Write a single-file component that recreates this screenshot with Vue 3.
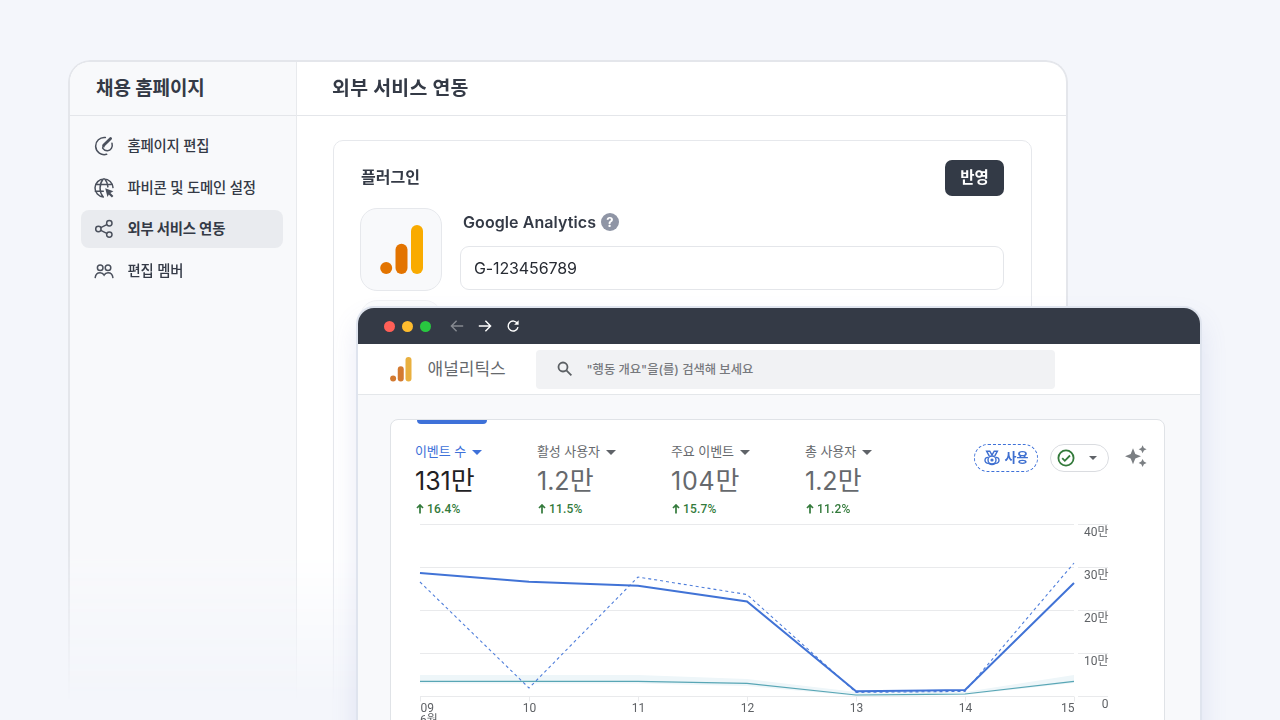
<template>
  <div class="stage" lang="ko">
    <section class="site-window">
      <aside class="sidebar">
        <h2 class="heading">채용 홈페이지</h2>
        <nav class="menu">
          <a v-for="item in menu" :key="item.icon" class="menu-item" :class="{ active: item.active }">
            <svg v-if="item.icon === 'edit'" class="menu-icon" viewBox="0 0 20 20">
              <path d="M11.4 1.5A8.6 8.6 0 1 0 12.6 18.3" />
              <path d="M18 7.2c1.1 3.9-1.2 7.4-4.5 7.5-2.2.1-3.7-.9-4.7-2.4" />
              <path d="M9.7 9.3 16.6 2.5" class="thick" />
              <path d="m7.8 12.2 1-3.5 2.3 2.3z" class="solid" />
            </svg>
            <svg v-else-if="item.icon === 'globe'" class="menu-icon" viewBox="0 0 20 20">
              <path d="M9.4 19A9 9 0 1 1 19 9.6M1.7 6.6h16.6M1.3 13.3h8M9.2 1.1C5 6.2 5 13.8 9.2 18.9M10.8 1.1c1.9 2.3 3 5 3.1 7.8" />
              <path d="m11.2 10.3 8.2 3-3 1.6 3 3.1-1.5 1.5-3.1-3.1-1.3 2.7z" class="solid" />
            </svg>
            <svg v-else-if="item.icon === 'share'" class="menu-icon" viewBox="0 0 20 20">
              <circle cx="4.4" cy="10" r="2.7" />
              <circle cx="15.3" cy="4.3" r="2.7" />
              <circle cx="15.3" cy="15.6" r="2.7" />
              <path d="m6.8 8.7 6-3.1M6.8 11.3l6 3.1" />
            </svg>
            <svg v-else class="menu-icon" viewBox="0 0 20 20">
              <circle cx="6.2" cy="6.7" r="2.8" />
              <circle cx="14" cy="6.7" r="2.8" />
              <path d="M1.2 16.6c.3-3 2.2-4.9 4.9-4.9 1.7 0 3.1.8 4 2.3.9-1.5 2.2-2.3 3.9-2.3 2.7 0 4.6 1.9 4.9 4.9" />
            </svg>
            <span>{{ item.label }}</span>
          </a>
        </nav>
      </aside>

      <main class="content">
        <h2 class="heading">외부 서비스 연동</h2>
        <div class="plugin-card">
          <div class="plugin-head">
            <h3>플러그인</h3>
            <button class="apply">반영</button>
          </div>
          <div class="plugin-row">
            <div class="thumb">
              <svg width="44" height="50" viewBox="0 0 44 50">
                <rect x="31" y="0" width="12" height="49" rx="6" fill="#f9ab00" />
                <rect x="15.5" y="18.7" width="12" height="30.3" rx="6" fill="#e37400" />
                <circle cx="6.2" cy="43.1" r="6" fill="#e37400" />
              </svg>
            </div>
            <div class="field">
              <label>Google Analytics <i class="help">?</i></label>
              <div class="input">G-123456789</div>
            </div>
          </div>
          <div class="plugin-row next">
            <div class="thumb"></div>
          </div>
        </div>
      </main>
    </section>

    <section class="browser">
      <header class="titlebar">
        <i class="dot red"></i>
        <i class="dot yellow"></i>
        <i class="dot green"></i>
        <svg class="nav-icon back dim" viewBox="0 0 14 14"><path d="M13.2 7H1.4M6.6 1.8 1.4 7l5.2 5.2" /></svg>
        <svg class="nav-icon" viewBox="0 0 14 14"><path d="M.8 7h11.8M7.4 1.8 12.6 7l-5.2 5.2" /></svg>
        <svg class="nav-icon" viewBox="0 0 14 14">
          <path d="M11.5 4.6A5 5 0 1 0 12 8.2" />
          <path d="M12.6 1.2v4.5H8.1z" class="solid" />
        </svg>
      </header>

      <div class="appbar">
        <svg class="logo" viewBox="0 0 44 50">
          <rect x="31" y="0" width="12" height="49" rx="6" fill="#e9b03f" />
          <rect x="15.5" y="18.7" width="12" height="30.3" rx="6" fill="#d37a31" />
          <circle cx="6.2" cy="43.1" r="6" fill="#d37a31" />
        </svg>
        <span class="product">애널리틱스</span>
        <div class="search">
          <svg width="16" height="16" viewBox="0 0 16 16">
            <circle cx="6" cy="6" r="4.5" />
            <path d="m9.4 9.4 5 5" />
          </svg>
          <span>"행동 개요"을(를) 검색해 보세요</span>
        </div>
      </div>

      <div class="report">
        <div class="report-card">
          <div class="summary">
            <div v-for="m in metrics" :key="m.label" class="metric" :class="{ selected: m.selected }">
              <div class="metric-label">{{ m.label }}<i class="caret"></i></div>
              <div class="metric-value" :class="{ wide: m.wide }">{{ m.value }}<span>만</span></div>
              <div class="metric-change">
                <svg width="8" height="10" viewBox="0 0 8 10"><path d="M4 9.6V1M1 4l3-3 3 3" /></svg>
                {{ m.change }}
              </div>
            </div>
            <div class="tools">
              <span class="badge">
                <svg width="16" height="16" viewBox="0 0 16 16">
                  <path d="M5.3 6.2 2.6 1.2h3.2L8 5l2.200-3.800h3.200l-2.700 5" />
                  <circle cx="8" cy="10" r="4" />
                  <circle cx="8" cy="10" r=".9" />
                  <path d="M4.3 7.4C2.2 7.2 1 8.5 1 10.3s1.3 3.3 3.700 3.100c2.100 1.500 4.500 1.500 6.600 0 2.400.2 3.700-1.300 3.700-3.100s-1.200-3.100-3.300-2.900" />
                </svg>
                <b>사용</b>
              </span>
              <span class="status">
                <svg width="18" height="18" viewBox="0 0 18 18">
                  <circle cx="9" cy="9" r="7.6" />
                  <path d="m5.2 9.2 2.6 2.6 5.2-5.3" />
                </svg>
                <i class="caret"></i>
              </span>
              <svg class="sparkle" width="22" height="22" viewBox="0 0 22 22">
                <path d="M8 3.2 10.3 8.900l5.700 2.300-5.700 2.300L8 19.200l-2.300-5.700L0 11.200l5.700-2.300z" />
                <path d="m17.6.2 1.300 2.700 2.700 1.300-2.700 1.300-1.300 2.700-1.300-2.700-2.700-1.300 2.700-1.300z" />
                <path d="m17.6 13.900 1.300 2.700 2.700 1.300-2.700 1.300-1.300 2.700-1.300-2.700-2.700-1.300 2.700-1.300z" />
              </svg>
            </div>
          </div>

          <svg class="chart" width="690" height="200" viewBox="0 0 690 200">
            <g class="grid">
              <path v-for="y in gridLines" :key="y" :d="`M0 ${y}H654M658 ${y}H688`" />
              <path v-for="(d, i) in days" :key="d" :d="`M${i * 109 + 0.5} 172.5v5`" />
            </g>
            <path class="band" d="M0 151H218L327 155 436 168 545 168 654 151V159L545 171 436 172 327 162 218 159.5H0z" />
            <polyline class="teal" :points="toPoints(users)" />
            <polyline class="dashed" :points="toPoints(previous)" />
            <polyline class="solid-line" :points="toPoints(current)" />
            <g class="axis">
              <text v-for="(t, i) in scale" :key="t" x="688.5" :y="12 + i * 43.1" text-anchor="end">{{ t }}</text>
              <text v-for="(d, i) in days" :key="d" :x="dayX(i)" y="187.6" :text-anchor="dayAnchor(i)">{{ d }}</text>
              <text x="0" y="200">6월</text>
            </g>
          </svg>
        </div>
      </div>
    </section>
  </div>
</template>

<script setup>
const menu = [
  { icon: 'edit', label: '홈페이지 편집' },
  { icon: 'globe', label: '파비콘 및 도메인 설정' },
  { icon: 'share', label: '외부 서비스 연동', active: true },
  { icon: 'members', label: '편집 멤버' },
]

const metrics = [
  { label: '이벤트 수', value: '131', change: '16.4%', selected: true },
  { label: '활성 사용자', value: '1.2', change: '11.5%' },
  { label: '주요 이벤트', value: '104', change: '15.7%', wide: true },
  { label: '총 사용자', value: '1.2', change: '11.2%' },
]

const days = ['09', '10', '11', '12', '13', '14', '15']
const scale = ['40만', '30만', '20만', '10만', '0']
const gridLines = [0.5, 43.5, 86.5, 129.5, 172.5]

const current = [49, 57.8, 61.8, 77.5, 167.2, 166, 59]
const previous = [58, 164, 53, 70.5, 168.4, 167.4, 39]
const users = [157.4, 157.4, 157.4, 159.3, 171, 170, 157.4]

const toPoints = (series) => series.map((y, i) => `${i * 109},${y}`).join(' ')

const dayX = (i) => (i === 6 ? 654.5 : i * 109 + 0.5)
const dayAnchor = (i) => {
  if (i === 0) return 'start'
  return i === 6 ? 'end' : 'middle'
}
</script>

<style>
body {
  background: #f4f6fb;
  overflow: hidden;
}
</style>

<style scoped>
* {
  box-sizing: border-box;
}

.stage {
  position: relative;
  width: 1280px;
  height: 720px;
  overflow: hidden;
  background: #f4f6fb;
  color: #343a46;
  font-family: Inter, 'Noto Sans CJK KR', sans-serif;
}

h2,
h3 {
  margin: 0;
}

svg {
  flex: none;
  fill: none;
}

/* site settings window */
.site-window {
  position: absolute;
  left: 68px;
  top: 60px;
  width: 1000px;
  height: 642px;
  display: flex;
  border: 2px solid #e4e6eb;
  border-bottom: none;
  border-radius: 22px 22px 0 0;
  background: #fff;
  overflow: hidden;
  -webkit-mask-image: linear-gradient(#000 76%, transparent 100%);
  mask-image: linear-gradient(#000 76%, transparent 100%);
}

.sidebar {
  width: 227px;
  background: #f8f9fb;
  border-right: 1px solid #e8eaed;
}

.heading {
  height: 54px;
  padding-left: 26px;
  border-bottom: 1px solid #e4e6ea;
  font-size: 19px;
  font-weight: 700;
  line-height: 54px;
  letter-spacing: -0.1px;
}

.menu {
  padding: 11px 13px 0 11px;
  display: flex;
  flex-direction: column;
  gap: 3.5px;
}

.menu-item {
  height: 38px;
  padding-left: 13px;
  display: flex;
  align-items: center;
  gap: 13.5px;
  border-radius: 8px;
  font-size: 14.4px;
  font-weight: 500;
  letter-spacing: -0.2px;
}

.menu-item span {
  padding-bottom: 3px;
}

.menu-item.active {
  background: #e9ebef;
  font-weight: 700;
}

.menu-icon {
  width: 20px;
  height: 20px;
  stroke: #4b515d;
  stroke-width: 1.5;
  stroke-linecap: round;
}

.menu-icon .thick {
  stroke-width: 2.8;
}

.menu-icon .solid {
  fill: #4b515d;
  stroke: none;
}

.content {
  flex: 1;
}

.content .heading {
  padding-left: 35px;
  font-size: 19.4px;
  line-height: 53px;
  letter-spacing: 0.3px;
}

.plugin-card {
  margin: 24px 34px 0 36px;
  height: 600px;
  padding: 19px 27px 19px 26px;
  border: 1px solid #e6e8ec;
  border-radius: 10px;
}

.plugin-head {
  display: flex;
  justify-content: space-between;
  margin-bottom: 12px;
}

.plugin-head h3 {
  padding-left: 1px;
  font-size: 16px;
  font-weight: 600;
  line-height: 34px;
}

.apply {
  width: 59px;
  height: 36px;
  padding: 0;
  border: 0;
  border-radius: 7px;
  background: #333a46;
  color: #fff;
  font: 700 15.5px/34px Inter, 'Noto Sans CJK KR', sans-serif;
}

.plugin-row {
  display: flex;
  gap: 18px;
  margin-bottom: 9px;
}

.next {
  opacity: 0.5;
}

.thumb {
  width: 82px;
  height: 83px;
  padding-left: 2px;
  display: flex;
  align-items: center;
  justify-content: center;
  border: 1px solid #e6e8ec;
  border-radius: 17px;
  background: #f8f9fb;
}

.field {
  flex: 1;
}

.field label {
  display: flex;
  align-items: center;
  gap: 5px;
  height: 28px;
  padding-left: 3px;
  font-size: 16px;
  font-weight: 600;
  letter-spacing: 0.08px;
}

.help {
  width: 18px;
  height: 18px;
  border-radius: 50%;
  background: #8f95a5;
  color: #fff;
  font-size: 13px;
  font-style: normal;
  font-weight: 700;
  line-height: 18px;
  text-align: center;
}

.input {
  height: 44px;
  margin-top: 10px;
  padding-left: 13px;
  border: 1px solid #e4e6ea;
  border-radius: 9px;
  color: #272b33;
  font-size: 16px;
  line-height: 43px;
  letter-spacing: -0.12px;
}

/* analytics browser window */
.browser {
  position: absolute;
  left: 358px;
  top: 308px;
  width: 842px;
  height: 430px;
  border-radius: 16px 16px 0 0;
  background: #f8f9fb;
  box-shadow: 0 0 0 2px #dfe4ee, 0 14px 28px rgba(98, 115, 190, 0.16);
}

.titlebar {
  height: 36px;
  padding-left: 26px;
  display: flex;
  align-items: center;
  gap: 7px;
  border-radius: 16px 16px 0 0;
  background: #343a46;
}

.dot {
  width: 11px;
  height: 11px;
  border-radius: 50%;
}

.red {
  background: #ff5f57;
}

.yellow {
  background: #febc2e;
}

.green {
  background: #28c840;
}

.nav-icon {
  width: 14px;
  height: 14px;
  margin-right: 7px;
  stroke: #fff;
  stroke-width: 1.4;
}

.nav-icon .solid {
  fill: #fff;
  stroke: none;
}

.back {
  margin-left: 12px;
}

.dim {
  opacity: 0.4;
}

.appbar {
  height: 51px;
  padding-left: 32px;
  display: flex;
  align-items: center;
  border-bottom: 1px solid #e4e7ea;
  background: #fff;
}

.logo {
  width: 22px;
  height: 25px;
}

.product {
  width: 108px;
  margin-left: 15.5px;
  color: #66696d;
  font-size: 17px;
  line-height: 24px;
}

.search {
  width: 519.5px;
  height: 39px;
  padding-left: 21px;
  display: flex;
  align-items: center;
  gap: 14px;
  border-radius: 4px;
  background: #f1f2f4;
  color: #77797d;
  font-size: 12.3px;
  font-weight: 500;
}

.search span {
  padding-bottom: 1px;
}

.search svg {
  stroke: #5c6064;
  stroke-width: 1.8;
}

.report {
  padding: 24px 35px 0 32px;
}

.report-card {
  position: relative;
  height: 330px;
  padding: 21px 0 0 24px;
  border: 1.5px solid #e0e3e7;
  border-radius: 8px;
  background: #fff;
}

/* active tab marker */
.report-card::before {
  content: '';
  position: absolute;
  left: 26px;
  top: 0;
  width: 70px;
  height: 4px;
  border-radius: 0 0 5px 5px;
  background: #3e71d9;
}

.summary {
  height: 83px;
  display: grid;
  grid-template-columns: 122px 134px 134px 168px 1fr;
}

.metric {
  color: #66696d;
}

.metric-label {
  display: flex;
  align-items: center;
  gap: 6px;
  height: 18px;
  font-size: 13px;
  letter-spacing: -0.1px;
  white-space: nowrap;
}

.caret {
  margin-top: 4px;
  border: 5px solid transparent;
  border-top-color: #5f6368;
  border-bottom: 0;
}

.metric-value {
  height: 40px;
  font-size: 25px;
  line-height: 44px;
}

.metric-value.wide {
  letter-spacing: 0.8px;
}

.metric-value span {
  font-size: 26px;
}

.metric-change {
  display: flex;
  align-items: center;
  gap: 3px;
  height: 20px;
  padding-left: 1px;
  color: #337a3b;
  font-family: Roboto, sans-serif;
  font-size: 12px;
  font-weight: 500;
  letter-spacing: 0.15px;
}

.metric-change svg {
  stroke: #337a3b;
  stroke-width: 1.7;
}

.selected .metric-label {
  color: #3e71d9;
}

.selected .caret {
  border-top-color: #3e71d9;
}

.selected .metric-value {
  color: #1f2124;
}

.tools {
  display: flex;
  align-items: flex-start;
  padding: 3px 0 0 1px;
}

.badge {
  width: 64px;
  height: 28px;
  display: flex;
  align-items: center;
  justify-content: center;
  gap: 5px;
  border: 1px dashed #3e71d9;
  border-radius: 14px;
  color: #3e6fd0;
  font-size: 13px;
}

.badge b {
  padding-bottom: 3px;
}

.badge svg {
  stroke: #3e6fd0;
  stroke-width: 1.4;
}

.status {
  width: 59px;
  height: 28px;
  margin: 0 16px 0 11.5px;
  padding: 0 11px 0 6.5px;
  display: flex;
  align-items: center;
  justify-content: space-between;
  border: 1px solid #dadce0;
  border-radius: 14px;
}

.status svg {
  stroke: #337a3b;
  stroke-width: 1.8;
}

.status .caret {
  margin-top: 0;
  border-width: 4.5px 4.5px 0;
}

.sparkle {
  margin-top: 1px;
  fill: #7b7f83;
}

.chart {
  display: block;
  margin-left: 5px;
  overflow: visible;
}

.grid path {
  stroke: #e9eaec;
}

.band {
  fill: #eef6f9;
}

.teal {
  stroke: #58a6b5;
  stroke-width: 1.2;
}

.dashed {
  stroke: #4f7edb;
  stroke-width: 1.1;
  stroke-dasharray: 3 3;
}

.solid-line {
  stroke: #4173d6;
  stroke-width: 2;
}

.axis {
  fill: #5f6266;
  font-family: Roboto, 'Noto Sans CJK KR', sans-serif;
  font-size: 12px;
}
</style>
